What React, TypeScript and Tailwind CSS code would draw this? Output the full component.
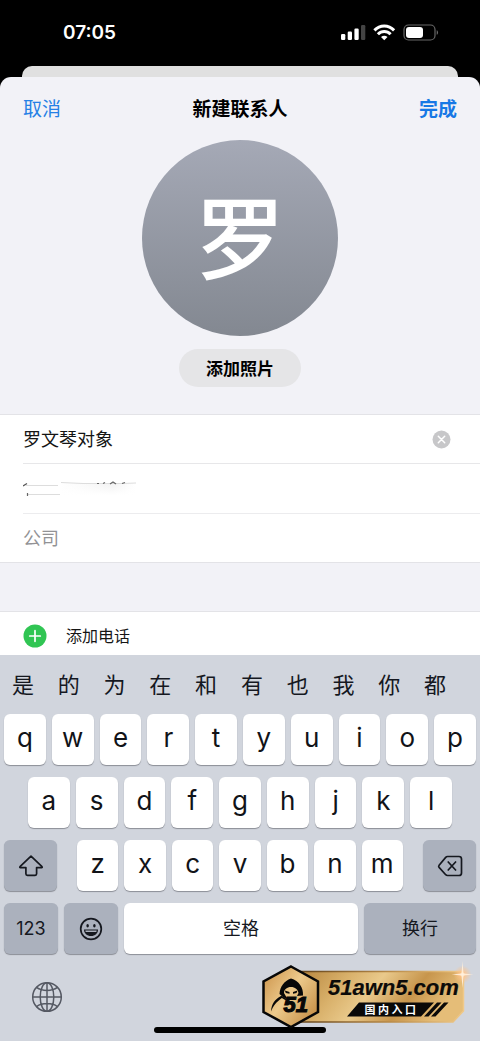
import React from "react";

const suggestions = ["是", "的", "为", "在", "和", "有", "也", "我", "你", "都"];
const topRow = "qwertyuiop".split("");
const middleRow = "asdfghjkl".split("");
const bottomRow = "zxcvbnm".split("");

const cjk = "font-['Inter','Noto_Sans_CJK_SC',sans-serif]";
const keyShape = "h-[51px] rounded-md shadow-[0_1px_1px_#8b8e96] flex items-center justify-center";

function LetterKey({ label }: { label: string }) {
  return (
    <button type="button" className={`${keyShape} min-w-0 flex-1 bg-white pb-1 text-[26px] leading-8 text-[#111318]`}>
      {label}
    </button>
  );
}

function StatusBar() {
  return (
    <div className="flex h-[66px] items-center justify-between pr-10 pl-[63px] text-white">
      <span className="text-[19px] leading-6 font-semibold">07:05</span>
      <svg className="h-5 w-[100px]" viewBox="0 0 100 20" fill="none" aria-hidden="true">
        <g fill="#fff">
          <rect x="1" y="11" width="4.300" height="6" rx="1.2" />
          <rect x="7.700" y="8.500" width="4.300" height="8.500" rx="1.2" />
          <rect x="14.400" y="5.500" width="4.300" height="11.500" rx="1.2" />
        </g>
        <rect x="21" y="2" width="4.300" height="15" rx="1.2" fill="#444" />
        <g stroke="#fff" strokeWidth="3">
          <path d="M34.400 7.400C40 1.600 48.500 1.600 54.100 7.400" />
          <path d="M37.900 11.300C41.600 7.500 46.900 7.500 50.600 11.300" />
        </g>
        <path d="M41 14c2-1.700 4.500-1.700 6.500 0l-3.250 3.300Z" fill="#fff" />
        <rect x="64" y="2" width="31" height="15" rx="4.500" stroke="#686868" strokeWidth="1.200" />
        <rect x="66" y="4" width="17" height="11" rx="3" fill="#fff" />
        <path d="M96.700 7.200c1.800.6 1.800 4 0 4.600Z" fill="#686868" />
      </svg>
    </div>
  );
}

function ShiftIcon() {
  return (
    <svg className="h-6 w-7" viewBox="0 0 28 24" fill="none" stroke="#15181f" strokeWidth="1.700" strokeLinejoin="round" aria-hidden="true">
      <path d="M14 2.200 25 12.700c.4.500.2.900-.4.900h-5v6.200q0 1.500-1.500 1.500h-7.700q-1.500 0-1.500-1.500v-6.200H3.400c-.6 0-.8-.4-.4-.9Z" />
    </svg>
  );
}

function DeleteIcon() {
  return (
    <svg className="h-6 w-7" viewBox="0 0 28 24" fill="none" stroke="#15181f" strokeWidth="1.700" strokeLinecap="round" strokeLinejoin="round" aria-hidden="true">
      <path d="M11.500 2.500h11.500q2.500 0 2.500 2.500v14q0 2.500-2.500 2.500H11.500q-1 0-1.800-.8l-6.600-7.300q-.9-1.100 0-2.200l6.600-7.800q.8-.9 1.800-.9Z" />
      <path d="m12.200 8 7.400 8m0-8-7.400 8" />
    </svg>
  );
}

function EmojiIcon() {
  return (
    <svg className="size-6" viewBox="0 0 24 24" fill="none" aria-hidden="true">
      <circle cx="12" cy="12" r="10.300" stroke="#15181f" strokeWidth="1.700" />
      <ellipse cx="8.600" cy="8.800" rx="1.250" ry="1.700" fill="#15181f" />
      <ellipse cx="15.400" cy="8.800" rx="1.250" ry="1.700" fill="#15181f" />
      <path d="M5 12.400h14c0 4.100-3 6.500-7 6.500s-7-2.400-7-6.500Z" fill="#15181f" />
      <path d="M6.300 13.500h11.400l-.4 1.600H6.700Z" fill="#abb1bd" />
    </svg>
  );
}

function GlobeIcon() {
  return (
    <svg className="size-8" viewBox="0 0 32 32" fill="none" stroke="#555963" strokeWidth="1.500" aria-hidden="true">
      <circle cx="16" cy="16" r="14.300" />
      <ellipse cx="16" cy="16" rx="6.800" ry="14.300" />
      <path d="M16 1.700v28.600M1.700 16h28.600M5.600 6.400c5.500 4 15.300 4 20.800 0M5.600 25.600c5.500-4 15.300-4 20.800 0" />
    </svg>
  );
}

function Badge() {
  return (
    <a href="#" className="absolute right-1 bottom-2 block h-[78px] w-[218px]" aria-label="51awn5.com 国内入口">
      <svg className="h-full w-full" viewBox="258 955 218 78" aria-hidden="true">
        <defs>
          <linearGradient id="banner" x1="0" x2="1" y1="0" y2="0.25">
            <stop offset="0" stopColor="#b8873f" />
            <stop offset="0.3" stopColor="#d9b16b" />
            <stop offset="0.5" stopColor="#e9c98b" />
            <stop offset="0.75" stopColor="#c7954c" />
            <stop offset="1" stopColor="#e5bd78" />
          </linearGradient>
          <linearGradient id="edge" x1="0" x2="1" y1="0" y2="0">
            <stop offset="0" stopColor="#65451c" />
            <stop offset="0.55" stopColor="#b98b48" />
            <stop offset="1" stopColor="#f0c988" />
          </linearGradient>
          <linearGradient id="hex" x1="0" x2="1" y1="0" y2="0.8">
            <stop offset="0" stopColor="#c98f45" />
            <stop offset="0.5" stopColor="#edca8c" />
            <stop offset="1" stopColor="#c58e45" />
          </linearGradient>
          <radialGradient id="glow">
            <stop offset="0" stopColor="#fff" />
            <stop offset="0.3" stopColor="#ffc48b" stopOpacity="0.8" />
            <stop offset="1" stopColor="#ffc48b" stopOpacity="0" />
          </radialGradient>
        </defs>
        <path d="M300 971.500H461q2.500 0 2.500 2.500v37L453 1022H300Z" fill="url(#banner)" stroke="url(#edge)" strokeWidth="1.500" />
        <path d="M291 966.500 318 981.500v30.500L291 1027 263.500 1012V981.500Z" fill="url(#hex)" stroke="#070707" strokeWidth="2.500" />
        <path d="M291 978.500c-7 2.500-11 8-11.500 15.500l4 3.500 4 1.500-3.500-6c0-3.500 3-6 7-6s7 2.500 7.500 6l-1.500 3 6-.5c.5-8-4-14.500-12-17Z" fill="#080808" />
        <path d="m284.800 990.500 4.700 1.400v1.800l-3.700-.7Zm12.700 0-4.500 1.400v1.800l3.500-.7Z" fill="#080808" />
        <path d="M281 996c-6 3-9.500 8-10 15.500 2-5 5-9.500 11.500-14Z" fill="#080808" />
        <path d="m281 996.500 5 3" stroke="#080808" strokeWidth="1.500" />
        <text x="283.500" y="1011.500" fontFamily="Liberation Sans, sans-serif" fontSize="22" fontWeight="700" fontStyle="italic" fill="#080808" stroke="#080808" strokeWidth="1.200">51</text>
        <text x="328" y="995" fontFamily="Liberation Sans, sans-serif" fontSize="22" fontWeight="700" fontStyle="italic" fill="#0c0b09" stroke="#0c0b09" strokeWidth="0.200">51awn5.com</text>
        <path d="M359 1002.500h75l-13 14H347Zm78 0h4.500l-13 14H424Zm7 0h4.500l-13 14H431Z" fill="#0a0908" />
        <text x="364.500" y="1013.500" fontFamily="Noto Sans CJK SC, sans-serif" fontSize="11" fontWeight="700" fill="#fff">国</text>
        <text x="378" y="1013.500" fontFamily="Noto Sans CJK SC, sans-serif" fontSize="11" fontWeight="700" fill="#fff">内</text>
        <text x="391.500" y="1013.500" fontFamily="Noto Sans CJK SC, sans-serif" fontSize="11" fontWeight="700" fill="#fff">入</text>
        <text x="405" y="1013.500" fontFamily="Noto Sans CJK SC, sans-serif" fontSize="11" fontWeight="700" fill="#fff">口</text>
        <circle cx="462.500" cy="974.500" r="9" fill="url(#glow)" />
        <path d="m462.500 961 1 12.500 10 1-10 1-1 12.500-1-12.500-10-1 10-1Z" fill="#fff0dc" fillOpacity="0.900" />
      </svg>
    </a>
  );
}

function Keyboard() {
  return (
    <section aria-label="键盘" className="relative flex grow flex-col bg-[#d1d5dd] text-[#15181f]">
      <div className="flex h-[59px] items-center pr-[22px]">
        {suggestions.map((word) => (
          <button type="button" key={word} className="min-w-0 flex-1 text-[22px] leading-8">
            {word}
          </button>
        ))}
      </div>
      <div className="flex flex-col gap-3 px-1">
        <div className="flex gap-1.5">
          {topRow.map((k) => <LetterKey key={k} label={k} />)}
        </div>
        <div className="flex gap-1.5 px-6">
          {middleRow.map((k) => <LetterKey key={k} label={k} />)}
        </div>
        <div className="flex gap-5">
          <button type="button" aria-label="Shift" className={`${keyShape} w-[53px] bg-[#abb1bd]`}><ShiftIcon /></button>
          <div className="flex flex-1 gap-1.5">
            {bottomRow.map((k) => <LetterKey key={k} label={k} />)}
          </div>
          <button type="button" aria-label="删除" className={`${keyShape} w-[53px] bg-[#abb1bd]`}><DeleteIcon /></button>
        </div>
        <div className="flex gap-1.5">
          <button type="button" className={`${keyShape} w-[54px] bg-[#abb1bd] text-lg`}>123</button>
          <button type="button" aria-label="表情" className={`${keyShape} w-[54px] bg-[#abb1bd]`}><EmojiIcon /></button>
          <button type="button" className={`${keyShape} flex-1 bg-white text-lg`}>空格</button>
          <button type="button" className={`${keyShape} w-28 bg-[#abb1bd] text-lg`}>换行</button>
        </div>
      </div>
      <div className="px-[31px] pt-[27px]">
        <button type="button" aria-label="切换输入法" className="block"><GlobeIcon /></button>
      </div>
      <div className="mx-auto mt-auto mb-2 h-1.5 w-[172px] rounded-full bg-black" />
      <Badge />
    </section>
  );
}

export default function App() {
  return (
    <main className={`flex min-h-screen flex-col bg-black ${cjk}`}>
      <StatusBar />
      <div className="mx-[22px] h-[11px] rounded-t-[10px] bg-[#e0e0e0]" />
      <div className="flex grow flex-col overflow-hidden rounded-t-[11px] bg-[#f2f2f7]">
        <header className="grid grid-cols-3 items-center px-[23px] pt-[19px] text-[19px] leading-7">
          <button type="button" className="justify-self-start text-[#2580e5]">取消</button>
          <h1 className="justify-self-center font-bold whitespace-nowrap text-black">新建联系人</h1>
          <button type="button" className="justify-self-end font-bold text-[#1778e5]">完成</button>
        </header>
        <div className="flex flex-col items-center gap-[13px] pt-4 pb-[27px]">
          <div className="flex size-[196px] items-center justify-center rounded-full bg-linear-to-b from-[#a5a9b6] to-[#838891] pt-1 text-[90px] leading-none font-medium text-white">
            罗
          </div>
          <button type="button" className="h-[38px] rounded-full bg-[#e5e5e7] px-[27px] pt-0.5 text-[17px] leading-6 font-bold text-black">添加照片</button>
        </div>
        <form className="flex flex-col">
          <div className="border-y border-[#e3e3e7] bg-white pl-[23px] text-lg text-[#151515]">
            <div className="flex h-[49px] items-center border-b border-[#e7e7e9] pr-[29px]">
              <input aria-label="姓名" defaultValue="罗文琴对象" className="min-w-0 flex-1 pt-0.5 outline-none" />
              <button type="button" aria-label="清除">
                <svg className="size-[19px]" viewBox="0 0 19 19" aria-hidden="true">
                  <circle cx="9.500" cy="9.500" r="9" fill="#c7c7c9" />
                  <path d="m6.300 6.300 6.400 6.400m0-6.400-6.400 6.400" stroke="#fff" strokeWidth="1.500" strokeLinecap="round" />
                </svg>
              </button>
            </div>
            <div className="flex h-[50px] items-center border-b border-[#ececee]">
              <svg className="h-5 w-[116px]" viewBox="0 0 116 20" fill="none" aria-hidden="true">
                <defs>
                  <linearGradient id="haze" x1="0" x2="1" y1="0" y2="0">
                    <stop offset="0" stopColor="#f4f4f4" stopOpacity="0" />
                    <stop offset="0.7" stopColor="#f1f1f1" />
                    <stop offset="1" stopColor="#f4f4f4" stopOpacity="0" />
                  </linearGradient>
                  <linearGradient id="fade" x1="0" x2="0" y1="0" y2="1">
                    <stop offset="0" stopColor="#fff" stopOpacity="0" />
                    <stop offset="1" stopColor="#fff" />
                  </linearGradient>
                </defs>
                <path d="M38 4h74v12H38Z" fill="url(#haze)" />
                <path d="M38 4h74v12H38Z" fill="url(#fade)" />
                <path d="M3 6.500h32M5 15.500h32M38 3.500l22 1h40l13-.5" stroke="#ddd" />
                <path d="m0 7 4-2.500" stroke="#555" strokeWidth="1.300" />
                <path d="M4.500 14v3M74 4.500h2m4 0 2-1m5 1.500 3-2 3 2m6-.5 3-1" stroke="#666" strokeWidth="1.200" />
              </svg>
            </div>
            <div className="flex h-[48px] items-center">
              <input aria-label="公司" placeholder="公司" className="min-w-0 flex-1 pt-0.5 outline-none placeholder:text-[#929295]" />
            </div>
          </div>
          <div className="mt-12 border-t border-[#e3e3e7] bg-white">
            <button type="button" className="flex h-[43px] w-full items-center gap-[19px] px-[23px] pt-1 text-base text-[#151515]">
              <svg className="size-6" viewBox="0 0 24 24" aria-hidden="true">
                <circle cx="12" cy="12" r="11.500" fill="#30c553" />
                <path d="M12 6.700v10.600M6.700 12h10.600" stroke="#fff" strokeWidth="1.700" strokeLinecap="round" />
              </svg>
              添加电话
            </button>
          </div>
        </form>
        <Keyboard />
      </div>
    </main>
  );
}
